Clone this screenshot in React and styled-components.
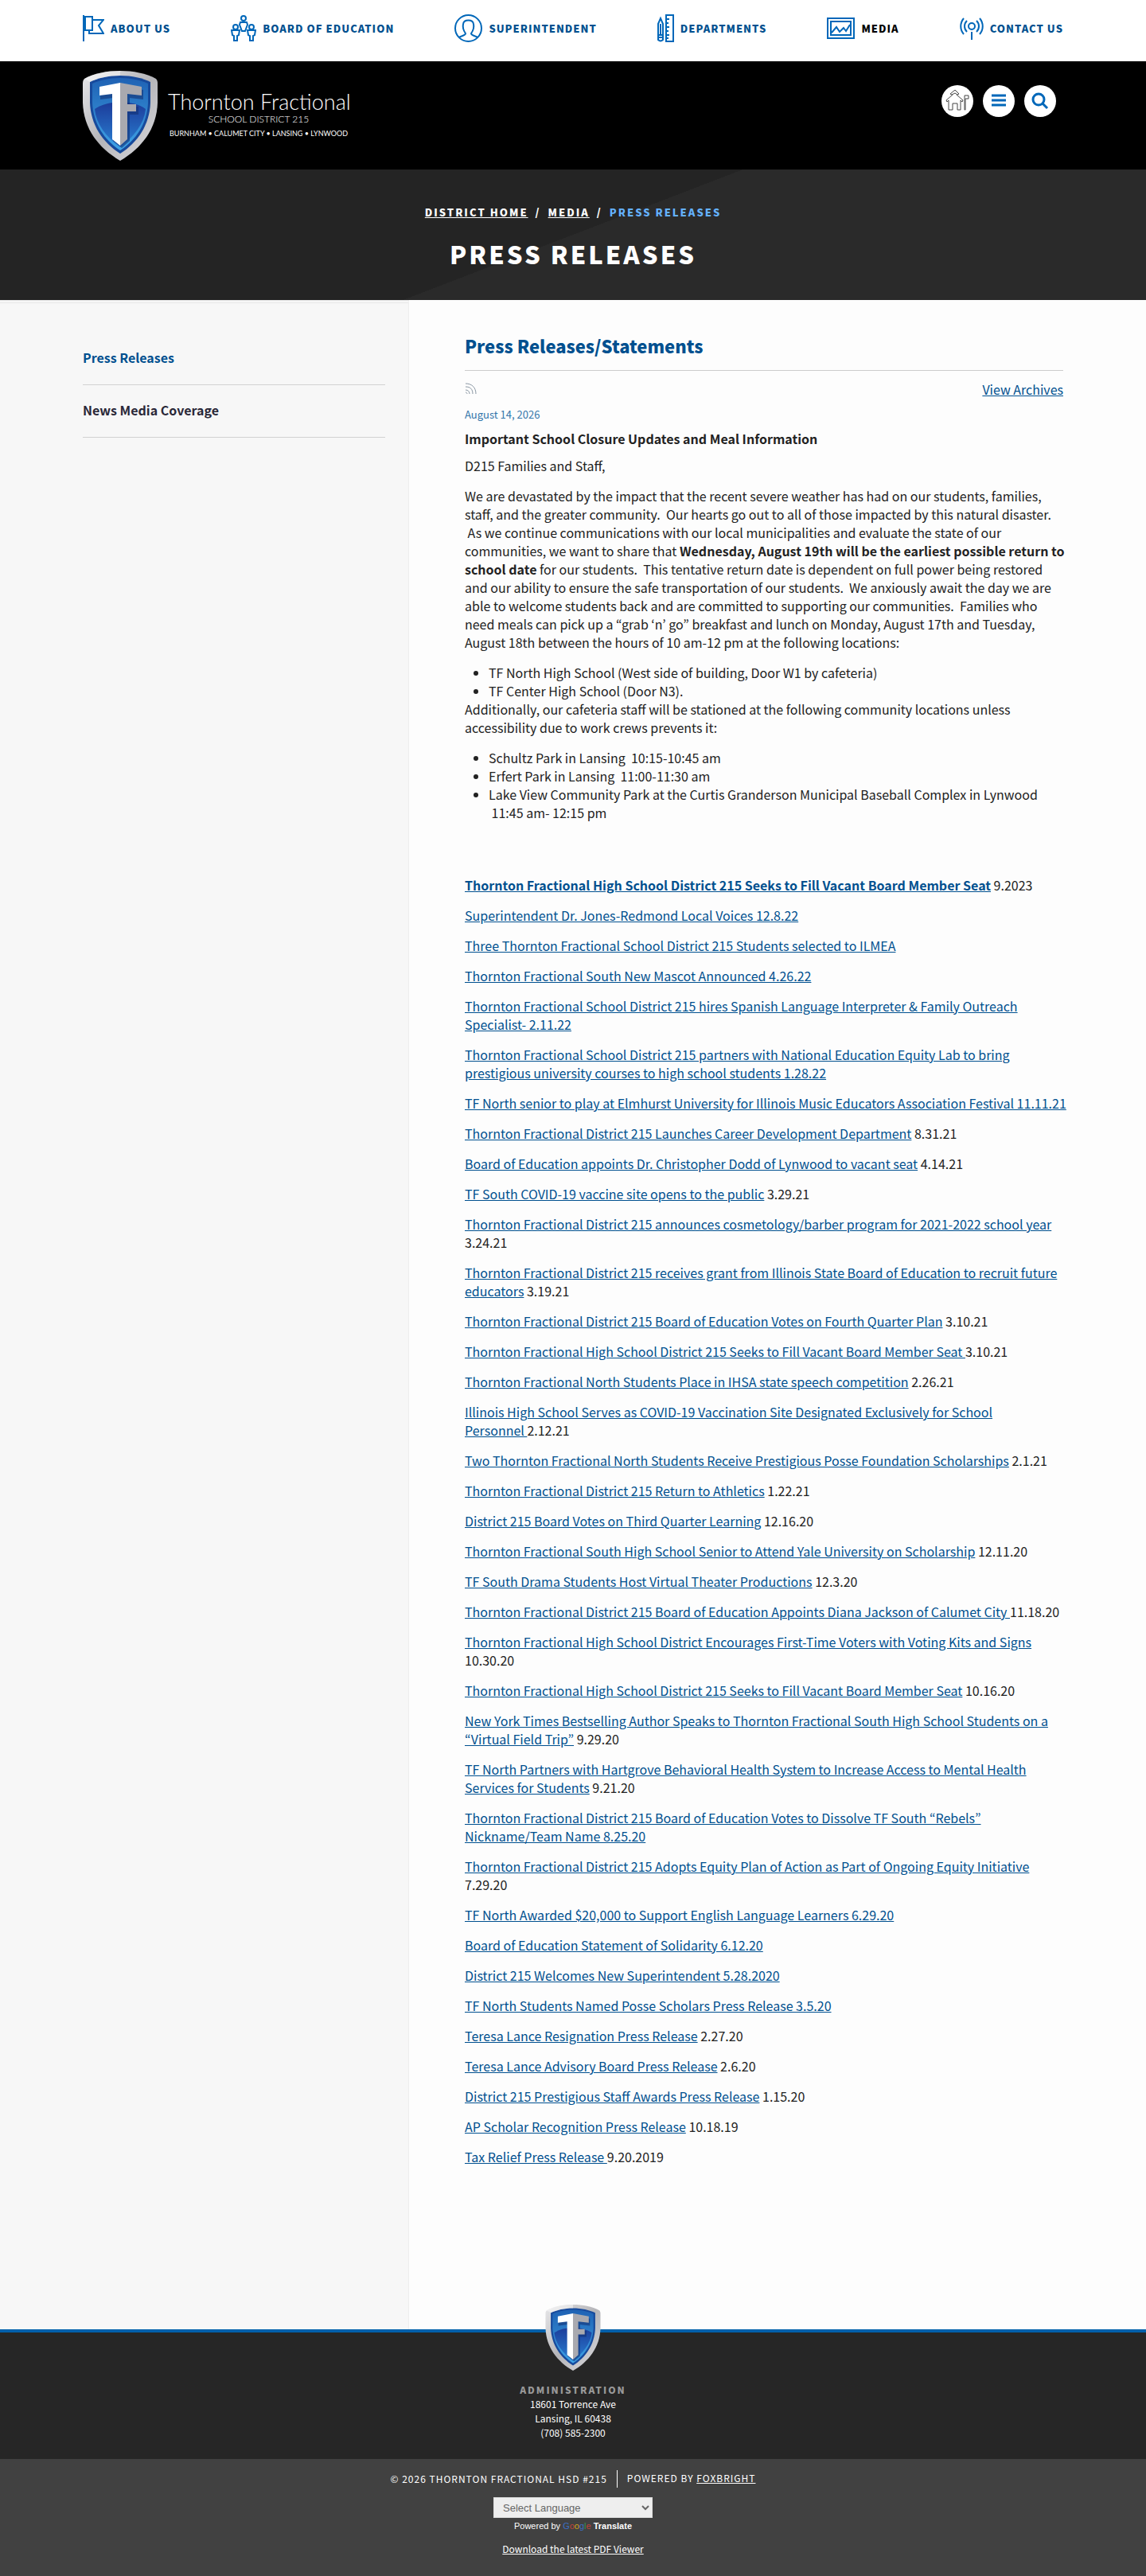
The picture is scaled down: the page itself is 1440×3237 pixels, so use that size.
import styled, { createGlobalStyle } from 'styled-components'

const GlobalStyle = createGlobalStyle`
  * { box-sizing: border-box; }
  body {
    margin: 0;
    background: #fdfdfd;
    font-family: 'Source Sans Pro', 'Noto Sans CJK KR', sans-serif;
    font-size: 16px;
    line-height: 23px;
    color: #222;
  }
`

const TopNav = styled.nav`
  display: flex;
  justify-content: space-between;
  height: 77px;
  padding: 18px 104px 0;
  background: #fff;
`

const NavItem = styled.a`
  display: flex;
  align-items: center;
  gap: 8px;
  height: 35px;
  font-size: 13px;
  font-weight: 900;
  letter-spacing: 1px;
  text-transform: uppercase;
  text-decoration: none;
  color: ${p => (p.$active ? '#000' : '#00508f')};

  svg {
    display: block;
    fill: none;
    stroke: #0067b9;
    stroke-width: 2;
  }
`

const Header = styled.header`
  display: flex;
  justify-content: space-between;
  height: 136px;
  padding: 12px 113px 0 104px;
  background: #000;
`

const Brand = styled.a`
  display: flex;
  gap: 13px;
  color: #fff;
  text-decoration: none;
`

const BrandText = styled.div`
  padding-top: 24px;
  width: 228px;
  font-family: Lato, sans-serif;
  text-align: center;
  white-space: nowrap;
`

const BrandName = styled.div`
  font-size: 27px;
  line-height: 30px;
  font-weight: 300;
`

const BrandSub = styled.div`
  font-size: 12px;
  line-height: 14px;
  font-weight: 300;
`

const BrandTowns = styled.div`
  margin-top: 5px;
  font-size: 9px;
  line-height: 12px;
`

const Tools = styled.div`
  display: flex;
  gap: 12px;
  padding-top: 18px;
`

const ToolButton = styled.button`
  display: flex;
  align-items: center;
  justify-content: center;
  width: 40px;
  height: 40px;
  padding: 0;
  border: 0;
  border-radius: 50%;
  background: #fff;

  svg {
    fill: none;
    stroke: ${p => (p.$outline ? '#444' : '#0067b9')};
    stroke-width: ${p => (p.$outline ? 1 : 3)};
  }
`

const Hero = styled.section`
  height: 164px;
  padding-top: 43px;
  text-align: center;
  color: #fff;
  background: linear-gradient(159deg, #242424 50%, #2a2a2a 50%);
`

const Crumbs = styled.div`
  display: flex;
  justify-content: center;
  gap: 9px;
  font-size: 13px;
  line-height: 22px;
  font-weight: 900;
  letter-spacing: 2px;
  text-transform: uppercase;
  white-space: nowrap;

  a { color: #fff; }
  b { color: #64b1ff; }
`

const HeroTitle = styled.h1`
  margin: 21px 0 0;
  font-size: 31px;
  line-height: 40px;
  font-weight: 900;
  letter-spacing: 3px;
  text-transform: uppercase;
`

const Columns = styled.div`
  display: flex;
`

const Sidebar = styled.aside`
  flex: 0 0 514px;
  padding: 37px 29px 0 104px;
  background: #f7f7f7;
  border-right: 1px solid #eee;
  border-top: 4px double #e8e8e8;
`

const SideLink = styled.a`
  display: block;
  height: 66px;
  padding-top: 20px;
  border-bottom: 1px solid #d2d2d2;
  font-weight: 700;
  text-decoration: none;
  color: ${p => (p.$active ? '#00508f' : '#2a2838')};
`

const Content = styled.main`
  flex: 1;
  min-width: 0;
  padding: 41px 104px 190px 70px;

  a { color: #00508f; }
  p { margin: 0 0 15px; }
`

const Title = styled.h2`
  margin: 0;
  padding-bottom: 15px;
  border-bottom: 1px solid #ccc;
  font-size: 22px;
  line-height: 32px;
  font-weight: 900;
  color: #00508f;
`

const FeedBar = styled.div`
  display: flex;
  justify-content: space-between;
  padding-top: 12px;
`

const RssIcon = styled.svg`
  width: 15px;
  height: 15px;
  margin-top: 3px;
  fill: none;
  stroke: #8a97a3;
`

const Article = styled.article`
  margin-right: -4px;
`

const DateLine = styled.div`
  margin: 8px 0;
  font-size: 13px;
  color: #3577ab;
`

const Headline = styled.h3`
  margin: 0 0 11px;
  font-size: 16px;
  line-height: 23px;
`

const Places = styled.ul`
  margin: 0;
  padding-left: 30px;
  & + p + & { margin-bottom: 68px; }
`

const Footer = styled.footer`
  display: flex;
  flex-direction: column;
  align-items: center;
  height: 163px;
  border-top: 4px solid #0060ab;
  background: #262626;
  color: #fff;
  font-size: 12px;
  line-height: 18px;

  svg { margin-top: -35px; flex: none; }
`

const FooterHead = styled.div`
  margin-top: 15px;
  font-weight: 900;
  letter-spacing: 2px;
  color: #999;
`

const Legal = styled.div`
  display: flex;
  flex-direction: column;
  align-items: center;
  height: 149px;
  padding-top: 14px;
  background: #414141;
  color: #fff;
  font-size: 12px;
  line-height: 22px;

  a { color: #fff; }
`

const Copyright = styled.div`
  display: flex;
  letter-spacing: 1px;

  span + span {
    margin-left: 12px;
    padding-left: 12px;
    border-left: 1px solid #fff;
    line-height: 20px;
  }
`

const Language = styled.select`
  width: 200px;
  height: 26px;
  margin-top: 12px;
  padding: 0 7px;
  border: 1px solid #ddd;
  border-radius: 0;
  background: #eee;
  color: #666;
  font: 13px 'Liberation Sans', sans-serif;
`

const Powered = styled.div`
  font: 11px/20px 'Liberation Sans', sans-serif;
  margin-bottom: 8px;
`

const Letter = styled.span`
  color: ${p => p.$color};
`

const Shield = ({ width, height, id }) => (
  <svg width={width} height={height} viewBox="0 0 94 113">
    <defs>
      <linearGradient id={`${id}-rim`} x1="0" y1="0" x2="1" y2="1">
        <stop offset="0" stopColor="#e8e8ea" />
        <stop offset=".5" stopColor="#b5b5b9" />
        <stop offset="1" stopColor="#dcdce0" />
      </linearGradient>
      <linearGradient id={`${id}-top`} x1="0" y1="0" x2="0" y2="1">
        <stop offset="0" stopColor="#1f62b4" />
        <stop offset="1" stopColor="#3fa3e6" />
      </linearGradient>
      <linearGradient id={`${id}-low`} x1="0" y1="0" x2="0" y2="1">
        <stop offset="0" stopColor="#1c3c9a" />
        <stop offset="1" stopColor="#2a7fd2" />
      </linearGradient>
    </defs>
    <path d="M47 0C31 0 14 3 2 10C0 12 0 14 0 17V40C1 73 20 97 47 113C74 97 93 73 94 40V17C94 14 94 12 92 10C80 3 63 0 47 0Z" fill={`url(#${id}-rim)`} />
    <path d="M47 6C32 6 19 9 9 14V40C10 68 25 90 47 104C69 90 84 68 85 40V14C75 9 62 6 47 6Z" fill="#174a9c" />
    <path d="M47 9C33 9 21 12 12 16V40C13 66 27 87 47 100C67 87 81 66 82 40V16C73 12 61 9 47 9Z" fill={`url(#${id}-top)`} />
    <path d="M15 48C31 37 62 36 79 48C77 67 64 83 47 96C29 83 17 67 15 48Z" fill={`url(#${id}-low)`} />
    <path d="M49 18L76 24V36L59 34V45H70V55H59V88L49 97L38 88V34L22 36V24Z" fill="#123274" opacity=".6" />
    <path d="M47 15L21 20V31L37 29V86L47 94Z" fill="#fff" />
    <path d="M47 15L74 20V31L56 29V42H67V51H56V86L47 94Z" fill="#a9a9af" />
    <path d="M47 0C31 0 14 3 2 10L9 14C19 9 32 6 47 6Z" fill="#fff" opacity=".45" />
  </svg>
)

const icons = {
  flag: (
    <svg width="27" height="33" viewBox="0 0 27 33">
      <path d="M1 0V33M3 2H12V19H3ZM12 6H26L20 13L26 23H8V19" />
    </svg>
  ),
  people: (
    <svg width="32" height="33" viewBox="0 0 32 33">
      <circle cx="16" cy="4" r="3" />
      <circle cx="6" cy="15" r="3" />
      <circle cx="26" cy="15" r="3" />
      <path d="M12 9H20L21 12L18 20H14L11 12ZM1 19H11L10 25L8 26V32H4V26L2 25ZM21 19H31L30 25L28 26V32H24V26L22 25Z" />
    </svg>
  ),
  person: (
    <svg width="35" height="35" viewBox="0 0 35 35">
      <circle cx="17.5" cy="17.5" r="16.5" />
      <path d="M6 29C8 27 14 27 14 24C11 20 10 17 11 12C12 6 23 6 24 12C25 17 24 20 21 24C21 27 27 27 29 29" />
    </svg>
  ),
  tools: (
    <svg width="21" height="35" viewBox="0 0 21 35">
      <path d="M1 12L4 5L7 12V32Q4 35 1 32ZM1 26H7M1 29H7M4 12V26M11 1H20V34H11ZM11 6H15M11 11H14M11 16H15M11 21H14M11 26H15M11 30H14" />
    </svg>
  ),
  picture: (
    <svg width="35" height="27" viewBox="0 0 35 27">
      <path d="M1 1H34V26H1ZM5 5H30V22H5ZM6 19L12 12L16 18L21 13L24 17L29 9" />
    </svg>
  ),
  antenna: (
    <svg width="30" height="28" viewBox="0 0 30 28">
      <circle cx="15" cy="11" r="4" />
      <path d="M15 18V28M9 4C5 8 5 14 9 18M21 4C25 8 25 14 21 18M5 1C0 7 0 15 5 21M25 1C30 7 30 15 25 21" />
    </svg>
  )
}

const nav = [
  ['About Us', 'flag'],
  ['Board of Education', 'people'],
  ['Superintendent', 'person'],
  ['Departments', 'tools'],
  ['Media', 'picture'],
  ['Contact Us', 'antenna']
]

// [link text, date that follows the link]
const releases = [
  ['Superintendent Dr. Jones-Redmond Local Voices 12.8.22'],
  ['Three Thornton Fractional School District 215 Students selected to ILMEA'],
  ['Thornton Fractional South New Mascot Announced 4.26.22'],
  ['Thornton Fractional School District 215 hires Spanish Language Interpreter & Family Outreach Specialist- 2.11.22'],
  ['Thornton Fractional School District 215 partners with National Education Equity Lab to bring prestigious university courses to high school students 1.28.22'],
  ['TF North senior to play at Elmhurst University for Illinois Music Educators Association Festival 11.11.21'],
  ['Thornton Fractional District 215 Launches Career Development Department', ' 8.31.21'],
  ['Board of Education appoints Dr. Christopher Dodd of Lynwood to vacant seat', ' 4.14.21'],
  ['TF South COVID-19 vaccine site opens to the public', ' 3.29.21'],
  ['Thornton Fractional District 215 announces cosmetology/barber program for 2021-2022 school year', ' 3.24.21'],
  ['Thornton Fractional District 215 receives grant from Illinois State Board of Education to recruit future educators', ' 3.19.21'],
  ['Thornton Fractional District 215 Board of Education Votes on Fourth Quarter Plan', ' 3.10.21'],
  ['Thornton Fractional High School District 215 Seeks to Fill Vacant Board Member Seat ', '3.10.21'],
  ['Thornton Fractional North Students Place in IHSA state speech competition', ' 2.26.21'],
  ['Illinois High School Serves as COVID-19 Vaccination Site Designated Exclusively for School Personnel\u00a0', '2.12.21'],
  ['Two Thornton Fractional North Students Receive Prestigious Posse Foundation Scholarships', ' 2.1.21'],
  ['Thornton Fractional District 215 Return to Athletics', ' 1.22.21'],
  ['District 215 Board Votes on Third Quarter Learning', ' 12.16.20'],
  ['Thornton Fractional South High School Senior to Attend Yale University on Scholarship', ' 12.11.20'],
  ['TF South Drama Students Host Virtual Theater Productions', ' 12.3.20'],
  ['Thornton Fractional District 215 Board of Education Appoints Diana Jackson of Calumet City ', '11.18.20'],
  ['Thornton Fractional High School District Encourages First-Time Voters with Voting Kits and Signs', ' 10.30.20'],
  ['Thornton Fractional High School District 215 Seeks to Fill Vacant Board Member Seat', ' 10.16.20'],
  ['New York Times Bestselling Author Speaks to Thornton Fractional South High School Students on a “Virtual Field Trip”', ' 9.29.20'],
  ['TF North Partners with Hartgrove Behavioral Health System to Increase Access to Mental Health Services for Students', ' 9.21.20'],
  ['Thornton Fractional District 215 Board of Education Votes to Dissolve TF South “Rebels” Nickname/Team Name 8.25.20'],
  ['Thornton Fractional District 215 Adopts Equity Plan of Action as Part of Ongoing Equity Initiative', ' 7.29.20'],
  ['TF North Awarded $20,000 to Support English Language Learners 6.29.20'],
  ['Board of Education Statement of Solidarity 6.12.20'],
  ['District 215 Welcomes New Superintendent 5.28.2020'],
  ['TF North Students Named Posse Scholars Press Release 3.5.20'],
  ['Teresa Lance Resignation Press Release', ' 2.27.20'],
  ['Teresa Lance Advisory Board Press Release', ' 2.6.20'],
  ['District 215 Prestigious Staff Awards Press Release', ' 1.15.20'],
  ['AP Scholar Recognition Press Release', ' 10.18.19'],
  ['Tax Relief Press Release ', '9.20.2019']
]

export default () => (
  <>
    <GlobalStyle />
    <TopNav>
      {nav.map(([label, icon]) => (
        <NavItem href="#" key={label} $active={label === 'Media'}>
          {icons[icon]}
          {label}
        </NavItem>
      ))}
    </TopNav>
    <Header>
      <Brand href="#">
        <Shield width={94} height={113} id="head" />
        <BrandText>
          <BrandName>Thornton Fractional</BrandName>
          <BrandSub>SCHOOL DISTRICT 215</BrandSub>
          <BrandTowns>BURNHAM • CALUMET CITY • LANSING • LYNWOOD</BrandTowns>
        </BrandText>
      </Brand>
      <Tools>
        <ToolButton aria-label="Schools" $outline>
          <svg width="30" height="28" viewBox="0 0 30 28">
            <path d="M9 6L1 13L2 15L4 13V25H9V17H15V25H19V13L21 15L22 13L14 6M6 5L12 0L17 5L15 6L12 4L8 6ZM24 25V7H29V11H25V25Z" />
          </svg>
        </ToolButton>
        <ToolButton aria-label="Menu">
          <svg width="18" height="18" viewBox="0 0 18 18">
            <path d="M0 2H18M0 8H18M0 14H18" />
          </svg>
        </ToolButton>
        <ToolButton aria-label="Search">
          <svg width="22" height="22" viewBox="0 0 22 22">
            <circle cx="9" cy="9" r="7" />
            <path d="M14 14L20 20" />
          </svg>
        </ToolButton>
      </Tools>
    </Header>
    <Hero>
      <Crumbs>
        <a href="#">District Home</a>
        <span>/</span>
        <a href="#">Media</a>
        <span>/</span>
        <b>Press Releases</b>
      </Crumbs>
      <HeroTitle>Press Releases</HeroTitle>
    </Hero>
    <Columns>
      <Sidebar>
        <SideLink href="#" $active>Press Releases</SideLink>
        <SideLink href="#">News Media Coverage</SideLink>
      </Sidebar>
      <Content>
        <Title>Press Releases/Statements</Title>
        <FeedBar>
          <RssIcon viewBox="0 0 15 15">
            <path d="M1 1C9 1 14 6 14 14M1 5C7 5 10 8 10 14M1 9C4 9 6 11 6 14M1 12C2 12 3 13 3 14" />
          </RssIcon>
          <a href="#">View Archives</a>
        </FeedBar>
        <Article>
          <DateLine>August 14, 2026</DateLine>
          <Headline>Important School Closure Updates and Meal Information</Headline>
          <p>D215 Families and Staff,</p>
          <p>
            We are devastated by the impact that the recent severe weather has had on our students, families, staff, and the greater community.&nbsp; Our hearts go out to all of those impacted by this natural disaster. &nbsp;As we continue communications with our local municipalities and evaluate the state of our communities, we want to share that <b>Wednesday, August 19th will be the earliest possible return to school date</b> for our students.&nbsp; This tentative return date is dependent on full power being restored and our ability to ensure the safe transportation of our students.&nbsp; We anxiously await the day we are able to welcome students back and are committed to supporting our communities.&nbsp; Families who need meals can pick up a “grab ‘n’ go” breakfast and lunch on Monday, August 17th and Tuesday, August 18th between the hours of 10 am-12 pm at the following locations:
          </p>
          <Places>
            <li>TF North High School (West side of building, Door W1 by cafeteria)</li>
            <li>TF Center High School (Door N3).</li>
          </Places>
          <p>Additionally, our cafeteria staff will be stationed at the following community locations unless accessibility due to work crews prevents it:</p>
          <Places>
            <li>Schultz Park in Lansing&nbsp; 10:15-10:45 am</li>
            <li>Erfert Park in Lansing&nbsp; 11:00-11:30 am</li>
            <li>Lake View Community Park at the Curtis Granderson Municipal Baseball Complex in Lynwood &nbsp;11:45 am- 12:15 pm</li>
          </Places>
          <p><a href="#"><b>Thornton Fractional High School District 215 Seeks to Fill Vacant Board Member Seat</b></a> 9.2023</p>
          {releases.map(([text, date]) => (
            <p key={text}><a href="#">{text}</a>{date}</p>
          ))}
        </Article>
      </Content>
    </Columns>
    <Footer>
      <Shield width={70} height={83} id="foot" />
      <FooterHead>ADMINISTRATION</FooterHead>
      <div>18601 Torrence Ave</div>
      <div>Lansing, IL 60438</div>
      <div>(708) 585-2300</div>
    </Footer>
    <Legal>
      <Copyright>
        <span>© 2026 THORNTON FRACTIONAL HSD #215</span>
        <span>POWERED BY <a href="#">FOXBRIGHT</a></span>
      </Copyright>
      <Language aria-label="Select Language">
        <option>Select Language</option>
      </Language>
      <Powered>
        Powered by{' '}
        <Letter $color="#3b6fc4">G</Letter>
        <Letter $color="#c0443a">o</Letter>
        <Letter $color="#d0a21c">o</Letter>
        <Letter $color="#3b6fc4">g</Letter>
        <Letter $color="#37944f">l</Letter>
        <Letter $color="#c0443a">e</Letter>
        {' '}<b>Translate</b>
      </Powered>
      <a href="#">Download the latest PDF Viewer</a>
    </Legal>
  </>
)
